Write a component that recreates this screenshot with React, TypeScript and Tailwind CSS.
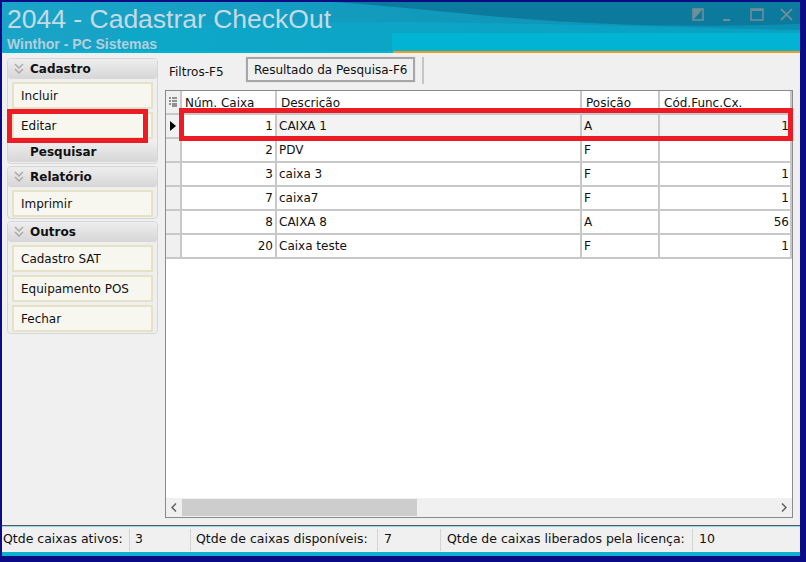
import React from 'react';

const font = { fontFamily: '"DejaVu Sans", Verdana, sans-serif' };
const titleFont = { fontFamily: '"Liberation Sans", Arial, sans-serif' };

type Row = { num: string; desc: string; pos: string; cod: string };

const rows: Row[] = [
  { num: '1', desc: 'CAIXA 1', pos: 'A', cod: '1' },
  { num: '2', desc: 'PDV', pos: 'F', cod: '' },
  { num: '3', desc: 'caixa 3', pos: 'F', cod: '1' },
  { num: '7', desc: 'caixa7', pos: 'F', cod: '1' },
  { num: '8', desc: 'CAIXA 8', pos: 'A', cod: '56' },
  { num: '20', desc: 'Caixa teste', pos: 'F', cod: '1' },
];

const Chevrons: React.FC = () => (
  <svg width="10" height="12" viewBox="0 0 10 12" className="mr-[6px] shrink-0">
    <path d="M1 1 L5 5 L9 1 M1 6 L5 10 L9 6" fill="none" stroke="#a8a8a8" strokeWidth="1.4" />
  </svg>
);

const GroupHeader: React.FC<{ title: string; chevron?: boolean }> = ({ title, chevron = true }) => (
  <div className="h-[20px] flex items-center pl-[6px] rounded-[3px] bg-gradient-to-b from-[#eeeeee] to-[#d6d6d6] text-[12px] font-bold text-[#111]">
    {chevron ? <Chevrons /> : <span className="w-[16px]" />}
    {title}
  </div>
);

const Item: React.FC<{ label: string; marked?: boolean }> = ({ label, marked }) => (
  <div className="relative h-[27px] mx-[4px] flex items-center pl-[7px] bg-[#f8f7ef] border-2 border-[#e6e2c8] text-[12px] text-[#111]">
    {label}
    {marked && (
      <div className="absolute left-[-7px] top-[-5px] w-[141px] h-[34px] border-[5px] border-[#ed1c24]" />
    )}
  </div>
);

const Sidebar: React.FC = () => (
  <div className="w-[160px] pl-[5px] pt-[5px] flex flex-col gap-[2px]">
    <div className="w-[151px] rounded-[4px] border border-[#d6d6d6] bg-[#efefef] flex flex-col gap-[3px] pb-[1px]">
      <GroupHeader title="Cadastro" />
      <Item label="Incluir" />
      <Item label="Editar" marked />
      <GroupHeader title="Pesquisar" chevron={false} />
    </div>
    <div className="w-[151px] rounded-[4px] border border-[#d6d6d6] bg-[#efefef] flex flex-col gap-[3px] pb-[1px]">
      <GroupHeader title="Relatório" />
      <Item label="Imprimir" />
    </div>
    <div className="w-[151px] rounded-[4px] border border-[#d6d6d6] bg-[#efefef] flex flex-col gap-[3px] pb-[1px]">
      <GroupHeader title="Outros" />
      <Item label="Cadastro SAT" />
      <Item label="Equipamento POS" />
      <Item label="Fechar" />
    </div>
  </div>
);

const cell = 'h-full flex items-center border-r-2 border-[#c8c8c8] text-[12px] text-[#111] overflow-hidden whitespace-nowrap';

const Grid: React.FC = () => (
  <div className="relative h-[428px] border border-[#8a8a8a] bg-white flex flex-col">
    {/* header */}
    <div className="h-[24px] flex border-b-2 border-[#c8c8c8]">
      <div className={`${cell} w-[16px] justify-center bg-[#f0f0f0]`}>
        <svg width="8" height="10" viewBox="0 0 8 10">
          <path d="M0 1h2M3 1h5M0 4h2M3 4h5M0 7h2M3 7h5M3 9h5" stroke="#333" strokeWidth="1.2" />
        </svg>
      </div>
      <div className={`${cell} w-[95px] pl-[3px] items-end pb-[1px]`}>Núm. Caixa</div>
      <div className={`${cell} w-[305px] pl-[4px] items-end pb-[1px]`}>Descrição</div>
      <div className={`${cell} w-[78px] pl-[4px] items-end pb-[1px]`}>Posição</div>
      <div className={`${cell} w-[132px] pl-[4px] items-end pb-[1px]`}>Cód.Func.Cx.</div>
    </div>
    {rows.map((r, i) => (
      <div key={r.num} className={`h-[24px] flex border-b-2 border-[#c8c8c8] ${i === 0 ? 'bg-[#f3f3f3]' : ''}`}>
        <div className={`${cell} w-[16px] justify-center bg-[#f0f0f0]`}>
          {i === 0 && (
            <svg width="6" height="10" viewBox="0 0 6 10">
              <path d="M0 0 L6 5 L0 10 Z" fill="#000" />
            </svg>
          )}
        </div>
        <div className={`${cell} w-[95px] justify-end pr-[2px] bg-white`}>{r.num}</div>
        <div className={`${cell} w-[305px] pl-[2px]`}>{r.desc}</div>
        <div className={`${cell} w-[78px] pl-[2px]`}>{r.pos}</div>
        <div className={`${cell} w-[132px] justify-end pr-[1px]`}>{r.cod}</div>
      </div>
    ))}
    <div className="flex-1" />
    {/* horizontal scrollbar */}
    <div className="h-[19px] bg-[#f0f0f0] flex items-center">
      <div className="w-[16px] flex justify-center">
        <svg width="6" height="9" viewBox="0 0 6 9">
          <path d="M5 0.5 L1 4.5 L5 8.5" fill="none" stroke="#606060" strokeWidth="1.5" />
        </svg>
      </div>
      <div className="w-[235px] h-[17px] bg-[#cdcdcd]" />
      <div className="flex-1" />
      <div className="w-[16px] flex justify-center">
        <svg width="6" height="9" viewBox="0 0 6 9">
          <path d="M1 0.5 L5 4.5 L1 8.5" fill="none" stroke="#606060" strokeWidth="1.5" />
        </svg>
      </div>
    </div>
    <div className="absolute left-[13px] top-[17px] w-[614px] h-[33px] border-[5px] border-[#ed1c24]" />
  </div>
);

const Content: React.FC = () => (
  <div className="flex-1 pl-[4px] pr-[7px] flex flex-col">
    <div className="h-[37px] flex items-start pt-[4px] text-[12px] text-[#111]">
      <div className="pl-[4px] pt-[6px] w-[81px]">Filtros-F5</div>
      <div className="h-[25px] w-[169px] border-2 border-[#a6a6a6] outline outline-1 outline-[#e8e8e8] bg-[#f0f0f0] flex items-center pl-[6px]">
        Resultado da Pesquisa-F6
      </div>
      <div className="ml-[7px] w-[2px] h-[27px] bg-[#c6c6c6]" />
    </div>
    <Grid />
  </div>
);

const TitleBar: React.FC = () => (
  <div style={titleFont} className="relative h-[49px] overflow-hidden">
    <svg className="absolute inset-0" width="798" height="49" viewBox="0 0 798 49" preserveAspectRatio="none">
      <defs>
        <linearGradient id="tb" x1="0" y1="0" x2="1" y2="0">
          <stop offset="0" stopColor="#1aa5c8" />
          <stop offset="1" stopColor="#0a8fb2" />
        </linearGradient>
      </defs>
      <rect width="798" height="49" fill="url(#tb)" />
      <path d="M330 0 C 460 8, 560 30, 798 22 L798 0 Z" fill="#0b7a9c" />
      <path d="M120 26 C 360 14, 600 24, 798 28 L798 49 L100 49 Z" fill="#0aa9cb" opacity="0.7" />
      <path d="M390 31 L798 31 L798 49 L390 49 Z" fill="#01b4d4" />
    </svg>
    <div className="relative pl-[5px] pt-[2px] text-[26.5px] leading-[30px] text-[#c4dbe6]">2044 - Cadastrar CheckOut</div>
    <div className="relative pl-[5px] pt-[2px] text-[14px] leading-[16px] font-bold text-[#b2cfdc]">Winthor - PC Sistemas</div>
    <div className="absolute top-[6px] right-[6px] flex items-start">
      <svg width="30" height="14" viewBox="0 0 30 14">
        <rect x="1" y="1" width="10" height="11" fill="none" stroke="#6e8e9a" strokeWidth="1.6" />
        <path d="M1 12 L11 1 L1 1 Z" fill="#6e8e9a" />
      </svg>
      <svg width="28" height="14" viewBox="0 0 28 14">
        <rect x="1" y="11" width="7" height="2" fill="#6e8e9a" />
      </svg>
      <svg width="30" height="14" viewBox="0 0 30 14">
        <rect x="1" y="1" width="12" height="11" fill="none" stroke="#6e8e9a" strokeWidth="1.6" />
        <rect x="1" y="1" width="12" height="2" fill="#6e8e9a" />
      </svg>
      <svg width="14" height="14" viewBox="0 0 14 14">
        <path d="M1 1 L12 12 M12 1 L1 12" stroke="#6e8e9a" strokeWidth="1.8" />
      </svg>
    </div>
  </div>
);

const StatusBar: React.FC = () => (
  <div className="h-[25px] bg-[#f0f0f0] flex items-center text-[12.5px] text-[#111]">
    <div className="w-[127px] pl-[1px]">Qtde caixas ativos:</div>
    <div className="w-[1px] h-[22px] bg-[#d4d4d4]" />
    <div className="w-[60px] pl-[5px]">3</div>
    <div className="w-[1px] h-[22px] bg-[#d4d4d4]" />
    <div className="w-[186px] pl-[5px]">Qtde de caixas disponíveis:</div>
    <div className="w-[1px] h-[22px] bg-[#d4d4d4]" />
    <div className="w-[62px] pl-[6px]">7</div>
    <div className="w-[1px] h-[22px] bg-[#d4d4d4]" />
    <div className="w-[251px] pl-[6px]">Qtde de caixas liberados pela licença:</div>
    <div className="w-[1px] h-[22px] bg-[#d4d4d4]" />
    <div className="pl-[6px]">10</div>
  </div>
);

export default function App() {
  return (
    <div style={font} className="w-[806px] h-[562px] bg-[#0b0b86] pt-[2px] pl-[2px] pr-[6px] pb-[4px] flex flex-col overflow-hidden">
      <TitleBar />
      <div className="h-[2px] flex">
        <div className="w-[391px] bg-[#01b4d4]" />
        <div className="flex-1 bg-[#f29b1d]" />
      </div>
      <div className="h-[472px] bg-[#f0f0f0] flex">
        <Sidebar />
        <Content />
      </div>
      <div className="h-[1px] bg-[#5a5a5a]" />
      <div className="h-[1px] bg-[#8fd8e8]" />
      <StatusBar />
      <div className="h-[4px] bg-[#0fb1cf]" />
    </div>
  );
}
